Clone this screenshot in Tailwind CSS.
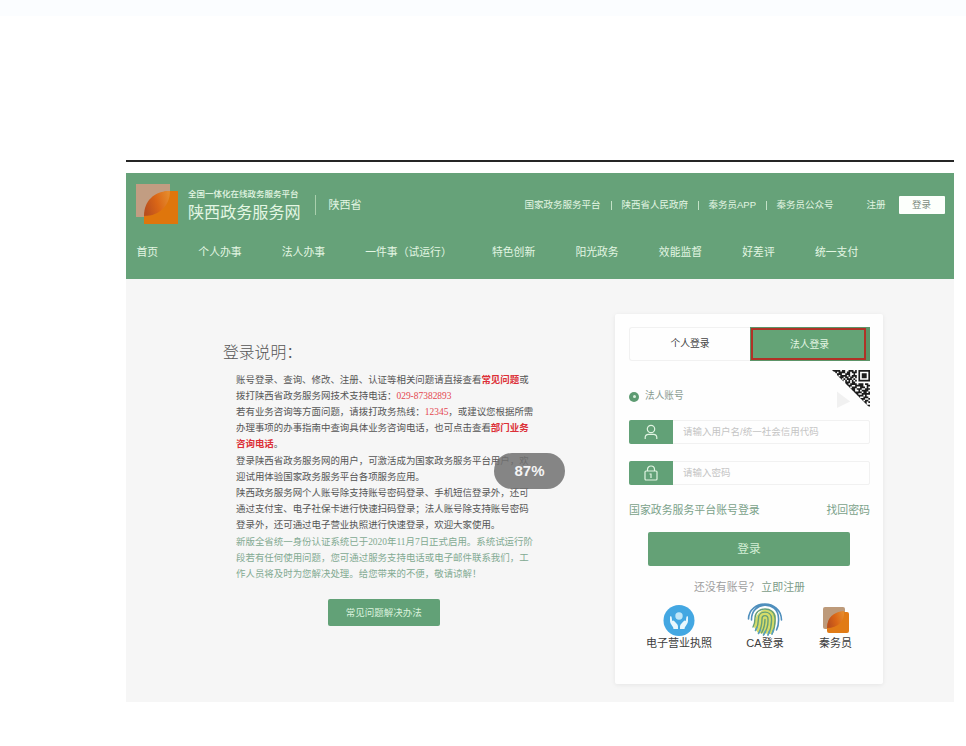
<!DOCTYPE html>
<html lang="zh-CN">
<head>
<meta charset="utf-8">
<title>陕西政务服务网</title>
<script src="https://cdn.jsdelivr.net/npm/@tailwindcss/browser@4"></script>
</head>
<body class="bg-white w-[966px] h-[746px] overflow-hidden font-['Liberation_Sans','Noto_Sans_CJK_SC',sans-serif] whitespace-nowrap">
<div class="h-4 bg-[#fbfdff]"></div>
<main class="relative ml-[126px] mt-[143.5px] w-[828px]">
  <div class="h-[2px] bg-[#252525]"></div>
  <header class="mt-[11.5px] h-[105.5px] bg-[#66a279] text-[#e3f6e3]">
    <div class="flex h-[64px] items-center pl-[10px]">
      <svg class="w-[42px] h-[42px] shrink-0 -mt-[2px]" viewBox="0 0 42 42">
        <defs><linearGradient id="leaf" x1="0" y1=".6" x2="1" y2=".3"><stop offset="0" stop-color="#b94e1e"/><stop offset=".5" stop-color="#da6616"/><stop offset="1" stop-color="#e58a2c"/></linearGradient></defs>
        <path fill="#c29d82" d="M0 1h34v33H0z"/><path fill="#df760c" d="M34 8h8v33H8v-8C10 20 20 8 34 8z"/>
        <path fill="url(#leaf)" d="M8 33C8 18 18 8 34 8C34 22 24 33 8 33z"/>
      </svg>
      <div class="ml-[10px] w-[114px]">
        <div class="text-[8.5px] leading-[14px] font-medium">全国一体化在线政务服务平台</div>
        <div class="text-[16.1px] leading-[23px]">陕西政务服务网</div>
      </div>
      <div class="ml-[12.5px] h-[20px] w-px bg-[#a9d0ad]"></div>
      <div class="ml-[13px] w-[34px] text-[11px]">陕西省</div>
      <div class="ml-[162px] flex items-center text-[9.5px]">
        <span class="w-[76px]">国家政务服务平台</span><i class="mx-[10px] h-[9px] w-px bg-[#c3e1c6]"></i>
        <span class="w-[66px]">陕西省人民政府</span><i class="mx-[10px] h-[9px] w-px bg-[#c3e1c6]"></i>
        <span class="w-[47px]">秦务员APP</span><i class="mx-[10px] h-[9px] w-px bg-[#c3e1c6]"></i>
        <span class="w-[57px]">秦务员公众号</span>
        <span class="ml-[33px] w-[20px]">注册</span>
        <span class="ml-[12px] flex h-[18px] w-[46px] items-center justify-center rounded-[1px] bg-[#fcfffc] text-[#7c8c80]">登录</span>
      </div>
    </div>
    <nav class="flex gap-[40.2px] pl-[10.5px] pt-[7px] text-[10.82px] leading-[16px]">
      <span>首页</span><span>个人办事</span><span>法人办事</span><span>一件事（试运行）</span><span>特色创新</span><span>阳光政务</span><span>效能监督</span><span>好差评</span><span>统一支付</span>
    </nav>
  </header>
  <div class="flex h-[423.5px] bg-[#f6f6f6]">
    <section class="ml-[97px] w-[320px] pt-[62px] text-[#555]">
      <h1 class="text-[15.8px] leading-[24px] font-light text-[#555]">登录说明：</h1>
      <div class="ml-[13px] mt-[7px] font-['Liberation_Serif','Noto_Sans_CJK_SC',serif] text-[9.45px] leading-[16.2px]">
        <p>账号登录、查询、修改、注册、认证等相关问题请直接查看<b class="text-[#dc3038]">常见问题</b>或<br>拨打陕西省政务服务网技术支持电话：<span class="text-[#e4474e]">029-87382893</span></p>
        <p>若有业务咨询等方面问题，请拨打政务热线：<span class="text-[#e4474e]">12345</span>，或建议您根据所需<br>办理事项的办事指南中查询具体业务咨询电话，也可点击查看<b class="text-[#dc3038]">部门业务<br>咨询电话</b>。</p>
        <p>登录陕西省政务服务网的用户，可激活成为国家政务服务平台用户，欢<br>迎试用体验国家政务服务平台各项服务应用。</p>
        <p>陕西政务服务网个人账号除支持账号密码登录、手机短信登录外，还可<br>通过支付宝、电子社保卡进行快速扫码登录；法人账号除支持账号密码<br>登录外，还可通过电子营业执照进行快速登录，欢迎大家使用。</p>
        <p class="text-[#82aa92]">新版全省统一身份认证系统已于2020年11月7日正式启用。系统试运行阶<br>段若有任何使用问题，您可通过服务支持电话或电子邮件联系我们，工<br>作人员将及时为您解决处理。给您带来的不便，敬请谅解！</p>
      </div>
      <div class="ml-[105px] mt-[17px] flex h-[27px] w-[111.5px] items-center justify-center rounded-[2px] bg-[#62a177] text-[9.5px] text-[#dcf3de]">常见问题解决办法</div>
    </section>
    <section class="ml-[72px] mt-[35.5px] h-[370px] w-[268px] rounded-[2px] bg-[#fefefe] pl-[14px] pr-[13px] pt-[13px] shadow-[0_1px_5px_rgba(0,0,0,0.07)]">
      <div class="flex h-[33.5px] text-[9.8px]">
        <div class="flex w-[121px] items-center justify-center rounded-l-[3px] border border-r-0 border-[#f1f1f1] pt-[2px] text-[#444]">个人登录</div>
        <div class="w-[119.5px] bg-[#5c9468]"><div class="ml-px mt-px flex h-[32px] w-[115px] items-center justify-center border-2 border-[#b03226] bg-[#64a376] pl-[2px] pt-[2px] text-[#e3f6e3]">法人登录</div></div>
      </div>
      <div class="flex h-[59.5px] justify-between">
        <div class="mt-[29px] flex h-[14px] items-center text-[9.7px] text-[#889b90]">
          <i class="mr-[6px] flex h-[10px] w-[10px] items-center justify-center rounded-full bg-[#5d9b72]"><i class="h-[3px] w-[3px] rounded-full bg-[#d9eedd]"></i></i>法人账号</div>
        <svg class="mt-[9px] w-[38px] h-[38px]" viewBox="0 0 23 23">
          <defs><clipPath id="fold"><path d="M0 0H23V23z"/></clipPath></defs>
          <path d="M3 13l8 6-8 4z" fill="#f1f1f1"/>
          <g clip-path="url(#fold)"><path stroke="#1c1c1c" stroke-width="1.05" d="M0 .5h5M6 .5h2M10 .5h3M14 .5h1M16 .5h7M2 1.5h1M4 1.5h4M9 1.5h2M12 1.5h3M16 1.5h1M22 1.5h1M3 2.5h3M8 2.5h3M13 2.5h1M16 2.5h1M18 2.5h3M22 2.5h1M3 3.5h1M5 3.5h4M10 3.5h1M12 3.5h3M16 3.5h1M18 3.5h3M22 3.5h1M4 4.5h3M8 4.5h2M11 4.5h2M14 4.5h1M16 4.5h1M18 4.5h3M22 4.5h1M5 5.5h1M7 5.5h1M9 5.5h3M13 5.5h1M16 5.5h1M22 5.5h1M6 6.5h1M8 6.5h1M10 6.5h1M12 6.5h1M14 6.5h1M16 6.5h7M8 7.5h3M12 7.5h2M8 8.5h2M11 8.5h4M16 8.5h3M20 8.5h2M9 9.5h3M14 9.5h5M21 9.5h2M10 10.5h1M12 10.5h3M17 10.5h3M21 10.5h1M11 11.5h3M15 11.5h3M20 11.5h3M12 12.5h2M16 12.5h1M18 12.5h4M13 13.5h5M19 13.5h2M22 13.5h1M14 14.5h2M18 14.5h5M15 15.5h4M20 15.5h1M16 16.5h1M19 16.5h3M17 17.5h3M22 17.5h1M18 18.5h1M20 18.5h2M19 19.5h2M22 19.5h1M20 20.5h1M21 21.5h2"/></g>
        </svg>
      </div>
      <div class="flex h-[24px] rounded-[2px] border border-[#f1f1f1] text-[9.5px] text-[#c4c4c4]">
        <div class="-my-px -ml-px flex w-[44px] items-center justify-center rounded-l-[2px] bg-[#62a177]"><svg class="h-[16px] w-[14px]" viewBox="0 0 14 16" fill="none" stroke="#e0f4e1" stroke-width="1.2"><circle cx="7" cy="5" r="3.7"/><path d="M1.2 15v-1.5Q1.2 10.3 4.5 10.3h5Q12.8 10.3 12.8 13.500V15"/></svg></div>
        <span class="self-center pl-[10px] pt-px">请输入用户名/统一社会信用代码</span>
      </div>
      <div class="mt-[17px] flex h-[24px] rounded-[2px] border border-[#f1f1f1] text-[9.5px] text-[#c4c4c4]">
        <div class="-my-px -ml-px flex w-[44px] items-center justify-center rounded-l-[2px] bg-[#62a177]"><svg class="h-[16px] w-[14px]" viewBox="0 0 14 16" fill="none" stroke="#e0f4e1" stroke-width="1.2"><rect x="1" y="6" width="12" height="9" rx="1"/><path d="M3.500 6V4.500a3.500 3.500 0 0 1 7 0V6M5.500 9H7v3.500M7 9v4"/></svg></div>
        <span class="self-center pl-[10px] pt-px">请输入密码</span>
      </div>
      <div class="mt-[17px] flex h-[16px] items-center justify-between text-[10.9px] text-[#7ba28a]"><span>国家政务服务平台账号登录</span><span>找回密码</span></div>
      <div class="ml-[19px] mt-[14px] flex h-[33.5px] w-[202px] items-center justify-center rounded-[2px] bg-[#64a176] text-[11.7px] text-[#d3efd5]">登录</div>
      <div class="mt-[13px] pl-[65px] text-[10.9px] leading-[16px] text-[#a0a0a0]">还没有账号？<span class="ml-[2px] text-[#7c9c88]">立即注册</span></div>
      <div class="mt-[8px] flex text-[11px] leading-[14px] text-[#3c3c3c]">
        <div class="ml-[17px] flex w-[66px] flex-col items-center">
          <svg class="h-[34px] w-[34px]" viewBox="0 0 34 34"><circle cx="17" cy="17.500" r="15.500" fill="#43a7e2"/><circle cx="17" cy="13" r="3.700" fill="#bfe6f8"/><path fill="#e8f7fd" d="M8 13.500q1.500-.8 1.700 1l.5 3.500q1-1.200 2.200.3l3 3.200q.8.900.6 4.500h-4.500q0-2-1.600-3.500Q8 20.500 8 18zM26 13.500q-1.500-.8-1.700 1l-.5 3.500q-1-1.200-2.200.3l-3 3.200q-.8.900-.6 4.500h4.500q0-2 1.600-3.500Q26 20.500 26 18z"/></svg>
          <span class="mt-[-1px]">电子营业执照</span>
        </div>
        <div class="ml-[34px] flex w-[38px] flex-col items-center">
          <svg class="h-[34px] w-[36px]" viewBox="0 0 36 34" fill="none" stroke-linecap="round">
            <path fill="#d5dc6a" d="M7 24C7 2 29 2 29 15Q29 24 24 31L11 30z"/>
            <g stroke="#4f8fbd" stroke-width="1.6"><path d="M1.500 16C2-4 34-4 34.500 17M4.500 17C4-2 31-3 31.500 15Q32 22 29.500 27"/></g>
            <g stroke="#669f78" stroke-width="1.400"><path d="M6 24Q8 20 8 15C8 3 28 3 28 15Q28.500 24 25 31M8.500 27.500Q11.500 22 11.500 15.500C11.500 7 24.500 7 24.500 15.500Q25 24 21 32M11.500 30.500Q15 24 15 16C15 11.500 21 11.500 21 16Q21.500 25 16.500 32M18 16.500Q18 24 14.500 30"/></g>
            <path stroke="#579fc2" stroke-width="1.500" d="M8.500 27.500l1.500-3M11.500 30.500l2-3.500M16.500 32l2-4M21 32l1.500-4M25 31l1.500-4"/>
          </svg>
          <span class="mt-[-1px]">CA登录</span>
        </div>
        <div class="ml-[34.5px] flex w-[34px] flex-col items-center">
          <svg class="h-[34px] w-[28px]" viewBox="0 0 28 34"><rect x="1" y="4" width="22" height="22" rx="2" fill="#bd9a7a"/><path fill="#e17b16" d="M22 9h3q2 0 2 2v17q0 2-2 2H7q-2 0-2-2v-4C6 15 13 9 22 9z"/><path fill="url(#leaf)" d="M5 25C5 14 12 9 22 8C23 18 16 25 5 25z"/></svg>
          <span class="mt-[-1px]">秦务员</span>
        </div>
      </div>
    </section>
  </div>
  <div class="absolute left-[368px] top-[293.500px] flex h-[36px] w-[71px] items-center justify-center rounded-full bg-[#717171]/85 text-[15px] font-bold text-[#f4f4f4]">87%</div>
</main>
</body>
</html>
